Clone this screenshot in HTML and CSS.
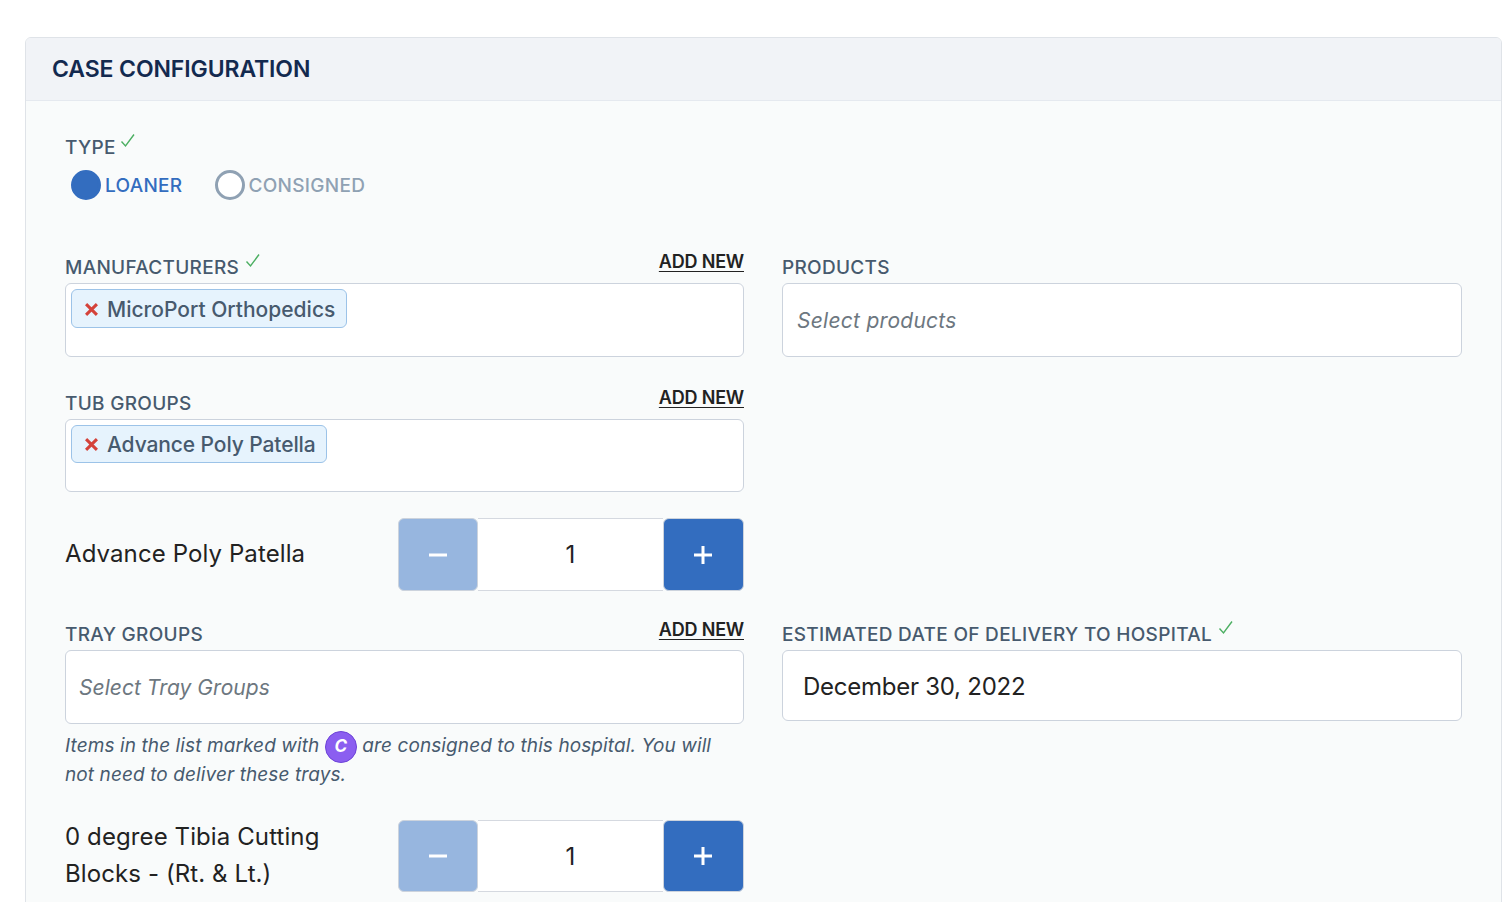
FILE: index.html
```html
<!DOCTYPE html>
<html lang="en">
<head>
<meta charset="utf-8">
<title>Case Configuration</title>
<link rel="stylesheet" href="styles.css">
</head>
<body>
<section class="card">
  <header class="card-head"><h2>CASE CONFIGURATION</h2></header>
  <div class="card-body">
    <div class="type">
      <div class="label-row"><span class="label">TYPE<svg class="check near" viewBox="0 0 16 16"><path d="M1.5 8.5 L5.5 13 L14 1.5"/></svg></span></div>
      <div class="radios">
        <span class="radio on"><i class="dot"></i>LOANER</span>
        <span class="radio"><i class="dot"></i>CONSIGNED</span>
      </div>
    </div>

    <div class="grid row-1">
      <div class="field">
        <div class="label-row"><span class="label">MANUFACTURERS<svg class="check" viewBox="0 0 16 16"><path d="M1.5 8.5 L5.5 13 L14 1.5"/></svg></span><a class="add">ADD NEW</a></div>
        <div class="box tall"><span class="tag"><svg class="x" viewBox="0 0 12 12"><path d="M1 1 L11 11 M11 1 L1 11"/></svg>MicroPort Orthopedics</span></div>
      </div>
      <div class="field">
        <div class="label-row"><span class="label">PRODUCTS</span></div>
        <div class="box tall placeholder">Select products</div>
      </div>
    </div>

    <div class="grid row-2">
      <div class="field">
        <div class="label-row"><span class="label">TUB GROUPS</span><a class="add">ADD NEW</a></div>
        <div class="box tall short"><span class="tag tag-tub"><svg class="x" viewBox="0 0 12 12"><path d="M1 1 L11 11 M11 1 L1 11"/></svg>Advance Poly Patella</span></div>
        <div class="qty-row first">
          <div class="qty-name">Advance Poly Patella</div>
          <div class="stepper s73"><span class="btn minus"><svg viewBox="0 0 18 18"><path d="M0 9 H18"/></svg></span><span class="num">1</span><span class="btn plus"><svg viewBox="0 0 18 18"><path d="M0 9 H18 M9 0 V18"/></svg></span></div>
        </div>
      </div>
    </div>

    <div class="grid row-3">
      <div class="field">
        <div class="label-row"><span class="label">TRAY GROUPS</span><a class="add">ADD NEW</a></div>
        <div class="box tall placeholder tight">Select Tray Groups</div>
        <p class="help">Items in the list marked with <span class="c">C</span> are consigned to this hospital. You will not need to deliver these trays.</p>
        <div class="qty-row second">
          <div class="qty-name">0 degree Tibia Cutting Blocks - (Rt. &amp; Lt.)</div>
          <div class="stepper s72"><span class="btn minus"><svg viewBox="0 0 18 18"><path d="M0 9 H18"/></svg></span><span class="num">1</span><span class="btn plus"><svg viewBox="0 0 18 18"><path d="M0 9 H18 M9 0 V18"/></svg></span></div>
        </div>
      </div>
      <div class="field">
        <div class="label-row"><span class="label">ESTIMATED DATE OF DELIVERY TO HOSPITAL<svg class="check" viewBox="0 0 16 16"><path d="M1.5 8.5 L5.5 13 L14 1.5"/></svg></span></div>
        <div class="box date">December 30, 2022</div>
      </div>
    </div>
  </div>
</section>
</body>
</html>
```
FILE: styles.css
```css
* { box-sizing: border-box; }
html, body { margin: 0; height: 902px; overflow: hidden; background: #fff; }
body { padding: 37px 0 0 25px; font-family: Inter, "Liberation Sans", sans-serif; color: #222; }

.card { width: 1477px; height: 900px; border: 1px solid #dfe3e8; border-radius: 6px 6px 0 0; background: #f9fbfb; overflow: hidden; }
.card-head { height: 63px; background: #f1f3f7; border-bottom: 1px solid #e5e9ef; padding-left: 26px; display: flex; align-items: center; }
.card-head h2 { margin: 0; font-size: 23px; font-weight: 600; letter-spacing: -0.1px; color: #13294f; }

.card-body { padding: 0 39px; }
.type { padding-top: 36px; height: 156px; }
.grid { display: grid; grid-template-columns: 679px 680px; column-gap: 38px; }
.row-2 { margin-top: 36px; }
.row-3 { margin-top: 33px; }
.row-3 .add { margin-top: -4px; }

.label-row { height: 26px; display: flex; justify-content: space-between; align-items: flex-start; }
.label { font-size: 19px; line-height: 22px; font-weight: 500; color: #475a6e; letter-spacing: 0.3px; display: inline-flex; align-items: flex-start; }
.check { width: 16px; height: 16px; margin: -4px 0 0 6px; fill: none; stroke: #4caf62; stroke-width: 1.4; }
.near { margin-left: 4px; }

.add { font-size: 18px; line-height: 20px; margin-top: -5px; font-weight: 600; letter-spacing: -0.2px; color: #222; text-decoration: underline; text-underline-offset: 3px; }

.radios { display: flex; gap: 32px; padding: 7px 0 0 6px; }
.radio { display: flex; align-items: center; gap: 4px; font-size: 19px; line-height: 30px; font-weight: 500; color: #8fa1b3; letter-spacing: 0.3px; }
.radio .dot { width: 30px; height: 30px; margin-bottom: 2px; border-radius: 50%; border: 3px solid #8fa1b3; background: #fff; }
.radio.on { color: #336dbf; }
.radio.on .dot { background: #336dbf; border-color: #336dbf; }

.box { background: #fff; border: 1px solid #ccd3dd; border-radius: 6px; display: flex; }
.tall { height: 74px; }
.short { height: 73px; }
.placeholder { align-items: center; padding-left: 14px; font-size: 21px; font-style: italic; color: #6d7780; letter-spacing: 0.27px; }
.tight { padding-left: 13px; letter-spacing: 0.05px; }
.date { height: 71px; align-items: center; padding: 2px 0 0 20px; font-size: 24px; color: #222; letter-spacing: -0.25px; }

.tag { height: 39px; margin: 5px 0 0 5px; padding: 1px 11px 0 13px; display: inline-flex; align-items: center; background: #e6f3fd; border: 1px solid #9cc3e8; border-radius: 6px; font-size: 21px; font-weight: 500; color: #475a6e; }
.tag-tub { height: 38px; padding-right: 10px; letter-spacing: -0.1px; }
.x { width: 13px; height: 13px; margin-right: 9px; fill: none; stroke: #d4423a; stroke-width: 2.8; }

.qty-row { display: flex; justify-content: space-between; align-items: center; }
.first { margin-top: 26px; }
.second { margin-top: 29px; }
.qty-name { width: 290px; padding-bottom: 2px; font-size: 24px; line-height: 37px; color: #222; letter-spacing: 0.1px; }
.stepper { width: 346px; display: flex; }
.s73 { height: 73px; }
.s72 { height: 72px; }
.btn { width: 80px; flex: none; display: flex; align-items: center; justify-content: center; border: 1px solid #ccd3dd; border-radius: 6px; }
.btn svg { width: 18px; height: 18px; fill: none; stroke: #fff; stroke-width: 3; }
.minus { background: #97b6df; }
.plus { width: 81px; padding-right: 1px; background: #336dbf; }
.num { flex: 1; display: flex; align-items: center; justify-content: center; background: #fff; border-top: 1px solid #d5d9e0; border-bottom: 1px solid #d5d9e0; font-size: 24px; color: #222; }

.help { margin: 7px 0 0; width: 679px; font-size: 19px; line-height: 29px; font-style: italic; color: #475a6e; letter-spacing: 0.1px; }
.c { display: inline-flex; width: 32px; height: 32px; margin: -4px 0; vertical-align: middle; align-items: center; justify-content: center; border-radius: 50%; background: #8b5ef0; border: 1px solid #6d43d8; color: #fff; font-size: 17px; font-weight: 700; font-style: italic; letter-spacing: 0; }
```
